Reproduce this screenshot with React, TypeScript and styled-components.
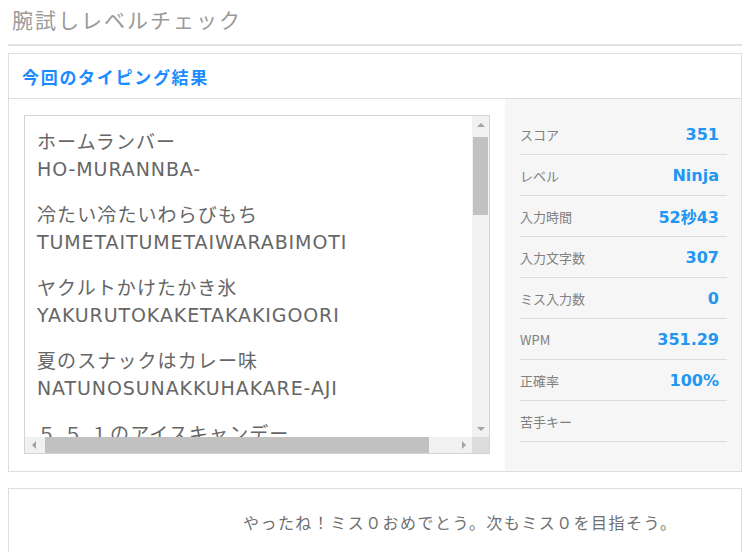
import styled, { createGlobalStyle } from "styled-components"

const GlobalStyle = createGlobalStyle`
    body {
        margin: 0;
        background: #fff;
        font-family: "DejaVu Sans", "Noto Sans CJK JP", sans-serif;
    }
`

const Page = styled.div`
    padding: 0 8px;
    width: 734px;
`

const PageTitle = styled.h1`
    margin: 0;
    height: 46px;
    padding: 4px 0 0 4px;
    box-sizing: border-box;
    border-bottom: 2px solid #e2e2e2;
    font-family: "Noto Sans CJK JP", sans-serif;
    font-size: 21px;
    font-weight: 400;
    letter-spacing: 2px;
    color: #9a9a9a;
`

const Panel = styled.section`
    margin-top: 7px;
    border: 1px solid #dedede;
`

const PanelHeader = styled.h2`
    margin: 0;
    height: 44px;
    padding-left: 13px;
    display: flex;
    align-items: center;
    border-bottom: 1px solid #dedede;
    font-family: "Noto Sans CJK JP", sans-serif;
    font-size: 17px;
    font-weight: 700;
    letter-spacing: 1.7px;
    color: #1a8cff;
`

const PanelBody = styled.div`
    display: flex;
    gap: 15px;
    padding-left: 15px;
`

const TextBox = styled.div`
    width: 466px;
    height: 339px;
    box-sizing: border-box;
    margin: 16px 0 17px;
    border: 1px solid #d4d4d4;
    display: flex;
    flex-direction: column;
`

const TextRow = styled.div`
    flex: 1;
    display: flex;
    min-height: 0;
`

const TextContent = styled.div`
    flex: 1;
    overflow: hidden;
    padding: 10px 12px 0;
    white-space: nowrap;
    color: #666;
`

const Word = styled.div`
    margin-bottom: 15px;
`

const Kana = styled.div`
    font-family: "Noto Sans CJK JP", sans-serif;
    font-size: 19px;
    letter-spacing: 1.1px;
    line-height: 29px;
`

const Romaji = styled.div`
    font-family: "DejaVu Sans", sans-serif;
    font-size: 19px;
    letter-spacing: 0.9px;
    line-height: 29px;
`

const VScroll = styled.div`
    width: 17px;
    background: #f1f1f1;
    display: flex;
    flex-direction: column;
    align-items: center;
`

const HScrollRow = styled.div`
    height: 16px;
    display: flex;
`

const HScroll = styled.div`
    flex: 1;
    background: #f1f1f1;
    display: flex;
    align-items: center;
`

const ArrowBox = styled.div`
    width: 17px;
    height: 17px;
    flex: none;
    display: flex;
    align-items: center;
    justify-content: center;
`

const VThumb = styled.div`
    width: 15px;
    height: 78px;
    margin-top: 4px;
    background: #c1c1c1;
`

const Spacer = styled.div`
    flex: 1;
`

const HThumb = styled.div`
    height: 16px;
    width: 384px;
    margin-left: 3px;
    background: #c1c1c1;
`

const Corner = styled.div`
    width: 17px;
    background: #dcdcdc;
`

const StatsPanel = styled.div`
    flex: 1;
    background: #f6f6f6;
    padding: 15px 14px 28px 15px;
`

const StatRow = styled.div`
    height: 40px;
    display: flex;
    align-items: center;
    justify-content: space-between;
    padding-right: 8px;
    border-bottom: 1px solid #dcdcdc;
`

const StatLabel = styled.span`
    font-family: "Noto Sans CJK JP", sans-serif;
    font-size: 13px;
    color: #808080;
    padding-top: 1px;
`

const StatValue = styled.span`
    font-family: "DejaVu Sans", "Noto Sans CJK JP", sans-serif;
    font-size: 16px;
    font-weight: 700;
    color: #2196f3;
`

const Message = styled.div`
    margin-top: 16px;
    height: 66px;
    box-sizing: border-box;
    border: 1px solid #dedede;
    padding: 21px 0 0 234px;
    font-family: "Noto Sans CJK JP", sans-serif;
    font-size: 16px;
    letter-spacing: 1.45px;
    color: #707070;
`

const Arrow = (props: { dir: "up" | "down" | "left" | "right" }) => {
    const points = {
        up: "0,6 4,2 8,6",
        down: "0,2 8,2 4,6",
        left: "6,0 6,8 2,4",
        right: "2,0 2,8 6,4",
    }[props.dir]
    return (
        <svg width="8" height="8" viewBox="0 0 8 8">
            <polygon points={points} fill="#a3a3a3" />
        </svg>
    )
}

const words = [
    { kana: "ホームランバー", romaji: "HO-MURANNBA-" },
    { kana: "冷たい冷たいわらびもち", romaji: "TUMETAITUMETAIWARABIMOTI" },
    { kana: "ヤクルトかけたかき氷", romaji: "YAKURUTOKAKETAKAKIGOORI" },
    { kana: "夏のスナックはカレー味", romaji: "NATUNOSUNAKKUHAKARE-AJI" },
    { kana: "５.５.１のアイスキャンデー", romaji: "GO.GO.ITINOAISUKYANNDE-" },
]

const stats = [
    { label: "スコア", value: "351" },
    { label: "レベル", value: "Ninja" },
    { label: "入力時間", value: "52秒43" },
    { label: "入力文字数", value: "307" },
    { label: "ミス入力数", value: "0" },
    { label: "WPM", value: "351.29" },
    { label: "正確率", value: "100%" },
    { label: "苦手キー", value: "" },
]

export default function App() {
    return (
        <Page>
            <GlobalStyle />
            <PageTitle>腕試しレベルチェック</PageTitle>
            <Panel>
                <PanelHeader>今回のタイピング結果</PanelHeader>
                <PanelBody>
                    <TextBox>
                        <TextRow>
                            <TextContent>
                                {words.map((w) => (
                                    <Word key={w.romaji}>
                                        <Kana>{w.kana}</Kana>
                                        <Romaji>{w.romaji}</Romaji>
                                    </Word>
                                ))}
                            </TextContent>
                            <VScroll>
                                <ArrowBox><Arrow dir="up" /></ArrowBox>
                                <VThumb />
                                <Spacer />
                                <ArrowBox><Arrow dir="down" /></ArrowBox>
                            </VScroll>
                        </TextRow>
                        <HScrollRow>
                            <HScroll>
                                <ArrowBox><Arrow dir="left" /></ArrowBox>
                                <HThumb />
                                <Spacer />
                                <ArrowBox><Arrow dir="right" /></ArrowBox>
                            </HScroll>
                            <Corner />
                        </HScrollRow>
                    </TextBox>
                    <StatsPanel>
                        {stats.map((s) => (
                            <StatRow key={s.label}>
                                <StatLabel>{s.label}</StatLabel>
                                <StatValue>{s.value}</StatValue>
                            </StatRow>
                        ))}
                    </StatsPanel>
                </PanelBody>
            </Panel>
            <Message>やったね！ミス０おめでとう。次もミス０を目指そう。</Message>
        </Page>
    )
}
